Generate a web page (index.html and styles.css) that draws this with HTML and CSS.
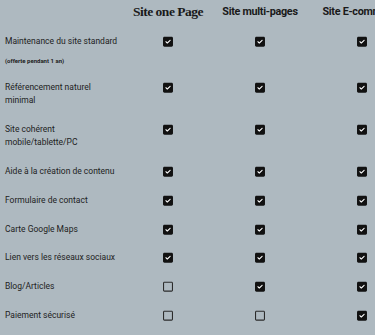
FILE: index.html
```html
<!DOCTYPE html>
<html lang="fr">
<head>
<meta charset="utf-8">
<title>Comparatif des offres</title>
<link rel="stylesheet" href="styles.css">
</head>
<body>
<svg class="defs" width="0" height="0" aria-hidden="true">
  <symbol id="yes" viewBox="0 0 448 512">
    <path d="M64 32C28.7 32 0 60.7 0 96V416c0 35.300 28.700 64 64 64H384c35.3 0 64-28.7 64-64V96c0-35.3-28.7-64-64-64H64z" fill="#111"/>
    <path d="M337 209L209 337c-9.4 9.4-24.6 9.4-33.9 0l-64-64c-9.4-9.4-9.4-24.6 0-33.9s24.6-9.4 33.9 0l47 47L303 175c9.4-9.4 24.6-9.4 33.9 0s9.4 24.6 0 33.9z" fill="#fff"/>
  </symbol>
  <symbol id="no" viewBox="0 0 448 512">
    <path d="M384 80c8.8 0 16 7.2 16 16V416c0 8.8-7.2 16-16 16H64c-8.8 0-16-7.2-16-16V96c0-8.8 7.2-16 16-16H384zM64 32C28.7 32 0 60.7 0 96V416c0 35.3 28.7 64 64 64H384c35.3 0 64-28.7 64-64V96c0-35.3-28.7-64-64-64H64z" fill="#2b2b2b"/>
  </symbol>
</svg>
<table class="compare">
  <colgroup>
    <col class="c-label"><col class="c-one"><col class="c-multi"><col class="c-shop">
  </colgroup>
  <thead>
    <tr>
      <th></th>
      <th class="h-serif">Site one Page</th>
      <th class="h-sans">Site multi-pages</th>
      <th class="h-sans">Site E-commerce</th>
    </tr>
  </thead>
  <tbody>
    <tr>
      <td class="label">Maintenance du site standard<span class="note">(offerte pendant 1 an)</span></td>
      <td><svg class="ico"><use href="#yes"/></svg></td>
      <td><svg class="ico"><use href="#yes"/></svg></td>
      <td><svg class="ico"><use href="#yes"/></svg></td>
    </tr>
    <tr>
      <td class="label">Référencement naturel minimal</td>
      <td><svg class="ico"><use href="#yes"/></svg></td>
      <td><svg class="ico"><use href="#yes"/></svg></td>
      <td><svg class="ico"><use href="#yes"/></svg></td>
    </tr>
    <tr>
      <td class="label">Site cohérent mobile/tablette/PC</td>
      <td><svg class="ico"><use href="#yes"/></svg></td>
      <td><svg class="ico"><use href="#yes"/></svg></td>
      <td><svg class="ico"><use href="#yes"/></svg></td>
    </tr>
    <tr>
      <td class="label">Aide à la création de contenu</td>
      <td><svg class="ico"><use href="#yes"/></svg></td>
      <td><svg class="ico"><use href="#yes"/></svg></td>
      <td><svg class="ico"><use href="#yes"/></svg></td>
    </tr>
    <tr>
      <td class="label">Formulaire de contact</td>
      <td><svg class="ico"><use href="#yes"/></svg></td>
      <td><svg class="ico"><use href="#yes"/></svg></td>
      <td><svg class="ico"><use href="#yes"/></svg></td>
    </tr>
    <tr>
      <td class="label">Carte Google Maps</td>
      <td><svg class="ico"><use href="#yes"/></svg></td>
      <td><svg class="ico"><use href="#yes"/></svg></td>
      <td><svg class="ico"><use href="#yes"/></svg></td>
    </tr>
    <tr>
      <td class="label">Lien vers les réseaux sociaux</td>
      <td><svg class="ico"><use href="#yes"/></svg></td>
      <td><svg class="ico"><use href="#yes"/></svg></td>
      <td><svg class="ico"><use href="#yes"/></svg></td>
    </tr>
    <tr>
      <td class="label">Blog/Articles</td>
      <td><svg class="ico"><use href="#no"/></svg></td>
      <td><svg class="ico"><use href="#yes"/></svg></td>
      <td><svg class="ico"><use href="#yes"/></svg></td>
    </tr>
    <tr>
      <td class="label">Paiement sécurisé</td>
      <td><svg class="ico"><use href="#no"/></svg></td>
      <td><svg class="ico"><use href="#no"/></svg></td>
      <td><svg class="ico"><use href="#yes"/></svg></td>
    </tr>
  </tbody>
</table>
</body>
</html>
```
FILE: styles.css
```css
html, body {
  margin: 0;
  padding: 0;
  background: #aeb9c0;
  overflow: hidden;
}
body {
  font-family: Roboto, "Liberation Sans", sans-serif;
  color: #222;
}
.defs {
  position: absolute;
  width: 0;
  height: 0;
}
.compare {
  border-collapse: collapse;
  table-layout: fixed;
  width: 415px;
}
.c-label { width: 125px; }
.c-one { width: 86px; }
.c-multi { width: 98px; }
.c-shop { width: 106px; }

.compare th {
  padding: 4px 0 7px;
  white-space: nowrap;
  color: #1a1a1a;
  text-align: center;
  line-height: 16px;
}
.h-serif {
  font-family: "Liberation Serif", "DejaVu Serif", serif;
  font-size: 13.5px;
  font-weight: 700;
  letter-spacing: -0.5px;
}
.h-sans {
  font-family: Roboto, "Liberation Sans", sans-serif;
  font-size: 10.8px;
  font-weight: 700;
  letter-spacing: -0.3px;
}
.compare td {
  vertical-align: top;
  text-align: center;
  padding: 7.8px 0;
  font-size: 8.5px;
  line-height: 13.2px;
}
.compare td.label {
  text-align: left;
  padding-left: 5px;
  padding-right: 5px;
}
.note {
  display: block;
  margin-top: 9.4px;
  font-size: 6px;
  font-weight: 700;
  line-height: 8px;
}
.ico {
  display: inline-block;
  width: 10px;
  height: 11.4px;
  margin-top: 1px;
  vertical-align: top;
}
```
